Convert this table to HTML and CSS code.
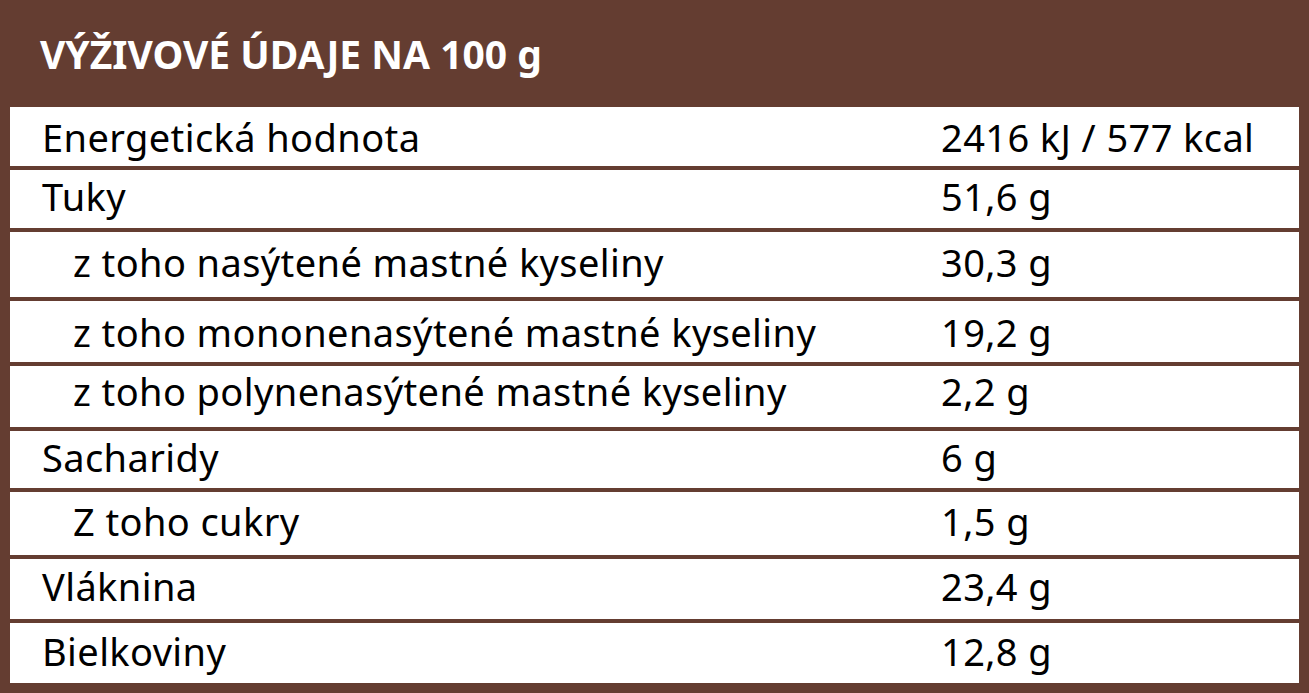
FILE: index.html
```html
<!DOCTYPE html>
<html lang="cs">
<head>
<meta charset="utf-8">
<title>Výživové údaje</title>
<link rel="stylesheet" href="styles.css">
</head>
<body>
<div class="panel">
  <div class="header">VÝŽIVOVÉ ÚDAJE NA 100 g</div>
  <div class="table">
    <div class="row"><span class="label">Energetická hodnota</span><span class="value">2416 kJ / 577 kcal</span></div>
    <div class="row"><span class="label">Tuky</span><span class="value">51,6 g</span></div>
    <div class="row"><span class="label sub">z toho nasýtené mastné kyseliny</span><span class="value">30,3 g</span></div>
    <div class="row"><span class="label sub">z toho mononenasýtené mastné kyseliny</span><span class="value">19,2 g</span></div>
    <div class="row"><span class="label sub">z toho polynenasýtené mastné kyseliny</span><span class="value">2,2 g</span></div>
    <div class="row"><span class="label">Sacharidy</span><span class="value">6 g</span></div>
    <div class="row"><span class="label sub">Z toho cukry</span><span class="value">1,5 g</span></div>
    <div class="row"><span class="label">Vláknina</span><span class="value">23,4 g</span></div>
    <div class="row"><span class="label">Bielkoviny</span><span class="value">12,8 g</span></div>
  </div>
</div>
</body>
</html>
```
FILE: styles.css
```css
html, body {
  margin: 0;
  padding: 0;
  background: #643d31;
}
body {
  width: 1309px;
  height: 693px;
  overflow: hidden;
  font-family: "Noto Sans", "Open Sans", sans-serif;
}
.panel {
  padding: 0 10px 10px 10px;
}
.header {
  height: 107px;
  display: flex;
  align-items: center;
  padding-left: 30px;
  color: #ffffff;
  font-weight: 700;
  font-size: 39px;
}
.table {
  display: flex;
  flex-direction: column;
  gap: 4px;
}
.row {
  box-sizing: border-box;
  background: #ffffff;
  display: grid;
  grid-template-columns: 899px 1fr;
  align-items: start;
  padding-left: 32px;
  color: #000000;
  font-size: 38px;
  line-height: 40px;
  letter-spacing: 0.4px;
  height: 60px;
}
.row:nth-child(1) { height: 59px; padding-top: 10px; }
.row:nth-child(2) { height: 58px; padding-top: 6px; }
.row:nth-child(3) { height: 65px; padding-top: 10px; }
.row:nth-child(4) { height: 61px; padding-top: 11px; }
.row:nth-child(5) { height: 61px; padding-top: 5px; }
.row:nth-child(6) { height: 57px; padding-top: 6px; }
.row:nth-child(7) { height: 63px; padding-top: 9px; }
.row:nth-child(8) { height: 60px; padding-top: 7px; }
.row:nth-child(9) { height: 60px; padding-top: 8px; }
.label {
  white-space: nowrap;
}
.label.sub {
  padding-left: 31px;
}
.value {
  white-space: nowrap;
}
```
